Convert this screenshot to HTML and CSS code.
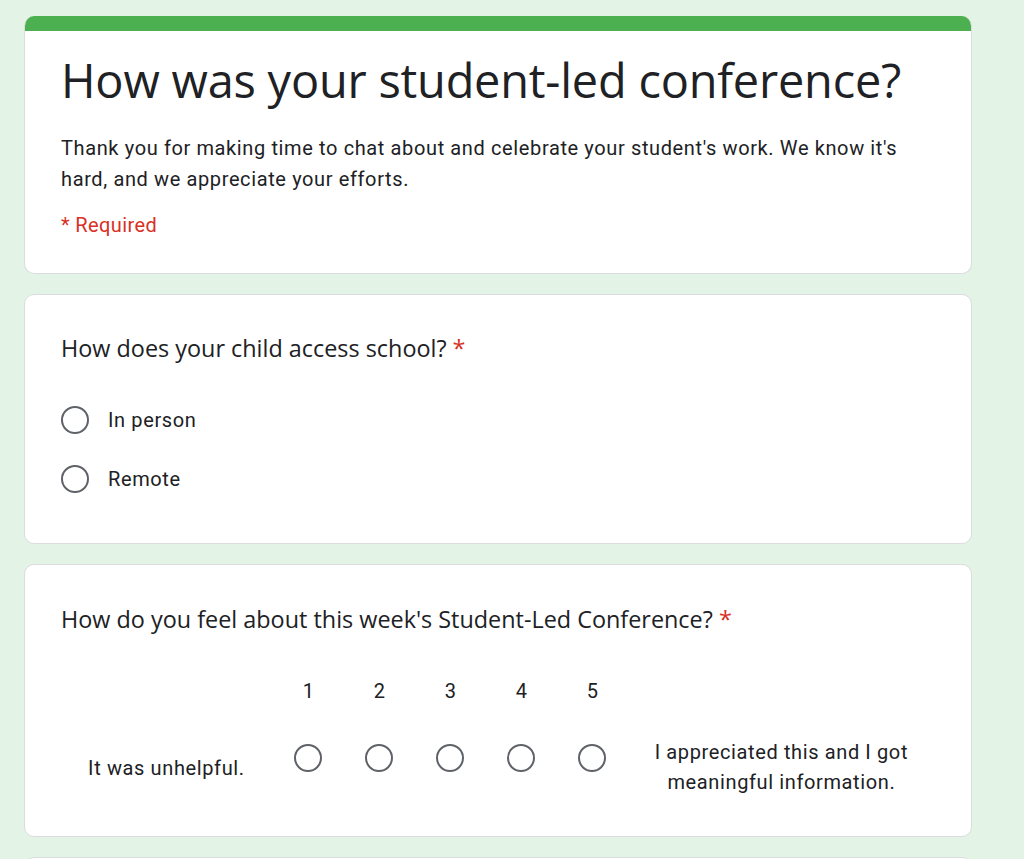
FILE: index.html
```html
<!DOCTYPE html>
<html>
<head>
<meta charset="utf-8">
<link rel="stylesheet" href="styles.css">
</head>
<body>
<div class="page">
  <div class="card header">
    <div class="bar"></div>
    <div class="header-body">
      <h1 class="title">How was your student-led conference?</h1>
      <p class="desc">Thank you for making time to chat about and celebrate your student's work. We know it's hard, and we appreciate your efforts.</p>
      <div class="required">* Required</div>
    </div>
  </div>

  <div class="card q1">
    <div class="question">How does your child access school? <span class="star">*</span></div>
    <div class="options">
      <div class="option"><span class="radio"></span><span class="opt-label">In person</span></div>
      <div class="option"><span class="radio"></span><span class="opt-label">Remote</span></div>
    </div>
  </div>

  <div class="card q2">
    <div class="question">How do you feel about this week's Student-Led Conference? <span class="star">*</span></div>
    <div class="scale">
      <div class="scale-low">It was unhelpful.</div>
      <div class="scale-cols">
        <div class="col"><span class="num">1</span><span class="radio"></span></div>
        <div class="col"><span class="num">2</span><span class="radio"></span></div>
        <div class="col"><span class="num">3</span><span class="radio"></span></div>
        <div class="col"><span class="num">4</span><span class="radio"></span></div>
        <div class="col"><span class="num">5</span><span class="radio"></span></div>
      </div>
      <div class="scale-high">I appreciated this and I got meaningful information.</div>
    </div>
  </div>

  <div class="card next"></div>
</div>
</body>
</html>
```
FILE: styles.css
```css
html, body {
  margin: 0;
  padding: 0;
  background: #e3f3e5;
  height: 100%;
  overflow: hidden;
}
body {
  font-family: Roboto, "Liberation Sans", Arial, sans-serif;
  color: #202124;
}
.page {
  width: 948px;
  padding: 16px 0 0 24px;
  display: flex;
  flex-direction: column;
  gap: 20px;
}
.card {
  background: #fff;
  border: 1px solid #dadce0;
  border-radius: 10px;
  box-sizing: border-box;
  width: 948px;
  overflow: hidden;
}
.header {
  border-top: none;
  height: 258px;
}
.bar {
  height: 15px;
  background: #4caf50;
}
.header-body {
  padding: 14px 36px 0 36px;
}
.title {
  font-family: "Open Sans", Roboto, sans-serif;
  font-weight: 400;
  font-size: 46.9px;
  line-height: 70px;
  margin: 0;
  letter-spacing: -0.2px;
}
.desc {
  margin: 18px 0 0 0;
  font-size: 20px;
  line-height: 31px;
  color: #202124;
  letter-spacing: 0.62px;
}
.required {
  margin-top: 15px;
  color: #d93025;
  font-size: 20px;
  line-height: 30px;
  letter-spacing: 0.4px;
}
.q1 {
  height: 250px;
  padding: 37px 36px 0 36px;
}
.question {
  font-family: "Open Sans", Roboto, sans-serif;
  font-size: 23.4px;
  line-height: 32px;
  color: #202124;
}
.star {
  color: #d93025;
}
.options {
  margin-top: 40px;
  display: flex;
  flex-direction: column;
  gap: 27px;
}
.option {
  display: flex;
  align-items: center;
  gap: 19px;
  height: 32px;
}
.radio {
  display: block;
  width: 24px;
  height: 24px;
  border: 2.5px solid #5f6368;
  border-radius: 50%;
  flex: none;
}
.opt-label {
  font-size: 20px;
  letter-spacing: 0.62px;
}
.q2 {
  height: 273px;
  padding: 38px 36px 0 36px;
}
.scale {
  margin-top: 44px;
  padding-left: 2px;
  display: flex;
  align-items: flex-end;
}
.scale-low {
  width: 210px;
  text-align: center;
  font-size: 20px;
  line-height: 30px;
  letter-spacing: 0.62px;
}
.scale-cols {
  display: flex;
  margin-left: 3px;
  padding-bottom: 10.5px;
}
.col {
  width: 71px;
  display: flex;
  flex-direction: column;
  align-items: center;
  gap: 41px;
}
.num {
  font-size: 20px;
  line-height: 24px;
}
.scale-high {
  width: 312px;
  text-align: center;
  font-size: 20px;
  line-height: 30px;
  letter-spacing: 0.62px;
  margin-bottom: -14px;
}
.next {
  height: 40px;
}
```
